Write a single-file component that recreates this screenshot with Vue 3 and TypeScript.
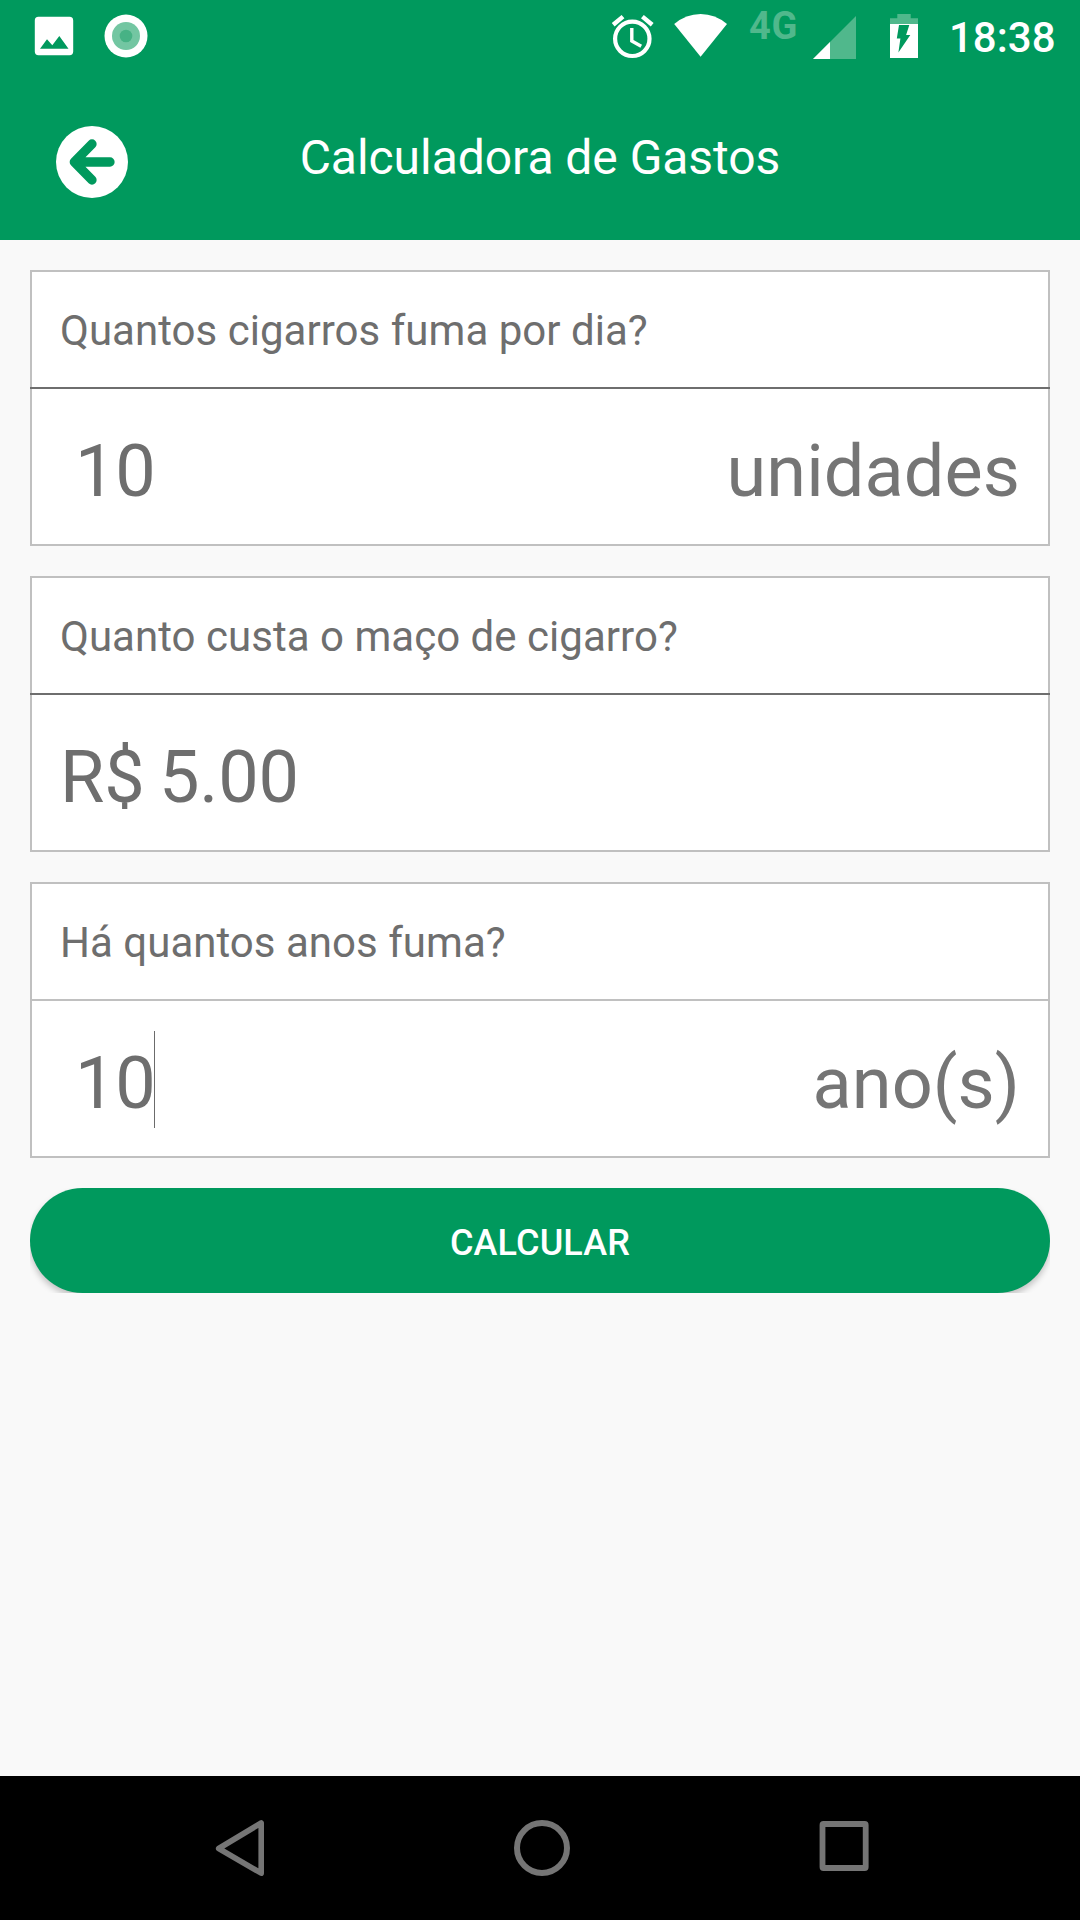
<script setup lang="ts">
interface Field {
  id: string
  label: string
  value: string
  unit?: string
  indented: boolean
  focused: boolean
}

const fields: Field[] = [
  { id: 'perDay', label: 'Quantos cigarros fuma por dia?', value: '10', unit: 'unidades', indented: true, focused: false },
  { id: 'price', label: 'Quanto custa o maço de cigarro?', value: 'R$ 5.00', indented: false, focused: false },
  { id: 'years', label: 'Há quantos anos fuma?', value: '10', unit: 'ano(s)', indented: true, focused: true },
]
</script>

<template>
  <div class="screen">
    <header class="header">
      <div class="status">
        <svg class="photo" width="40" height="40" viewBox="34 16 40 40">
          <path fill="#fff" fill-rule="evenodd" d="M38.5 16.7h31a3.7 3.7 0 0 1 3.7 3.7v31.200a3.700 3.700 0 0 1-3.700 3.700h-31a3.700 3.700 0 0 1-3.700-3.700V20.400a3.700 3.700 0 0 1 3.700-3.700zM40 48.700h28.500L59.300 36l-7 9.300-5.300-6z" />
        </svg>
        <svg class="record" width="44" height="44" viewBox="0 0 44 44">
          <circle cx="22" cy="22" r="21.500" fill="#fff" />
          <circle cx="22" cy="22" r="14" fill="#73c6a2" />
          <circle cx="22" cy="22" r="6.300" fill="#47b285" />
        </svg>
        <div class="spacer"></div>
        <svg class="alarm" width="44" height="46" viewBox="610 14 44 46">
          <g fill="none" stroke="#fff">
            <circle cx="632.300" cy="38.800" r="17.200" stroke-width="4.200" />
            <path stroke-width="3.400" d="M631.800 28v13l9.400 5.200" />
            <path stroke-width="4.400" d="M613.200 24.800l9.800-8.200M642.400 16.600l9.800 8.200" />
          </g>
        </svg>
        <svg class="wifi" width="54" height="44" viewBox="674 14 54 44">
          <path fill="#fff" d="M674.200 24Q686 14 700.600 14T727 24L700.600 56.700z" />
        </svg>
        <span class="network">4G</span>
        <svg class="signal" width="44" height="44" viewBox="813 16 44 44">
          <path fill="#50b88c" d="M856 16v43h-43z" />
          <path fill="#fff" d="M830 42v17h-17z" />
        </svg>
        <svg class="battery" width="28" height="45" viewBox="890 14 28 45">
          <path fill="#50b88c" d="M897.300 14h13.400v4.300h7.300V24h-28v-5.700h7.300z" />
          <path fill="#fff" fill-rule="evenodd" d="M890 24h28v34h-28zM899 25l-2.200 13.500h3.600l-2 14L910.300 35h-4.200l3.200-10z" />
        </svg>
        <span class="clock">18:38</span>
      </div>
      <div class="appbar">
        <svg class="back" width="72" height="72" viewBox="0 0 72 72">
          <circle cx="36" cy="36" r="36" fill="#fff" />
          <path fill="none" stroke="#00995d" stroke-width="9.300" stroke-linecap="round" stroke-linejoin="round" d="M36 18L18.300 36 36 54M19 36h35" />
          <path fill="#00995d" d="M18 36l8-8v16z" />
        </svg>
        <h1 class="title">Calculadora de Gastos</h1>
      </div>
    </header>

    <main class="content">
      <section v-for="f in fields" :key="f.id" class="card" :class="{ focused: f.focused }">
        <div class="label">{{ f.label }}</div>
        <div class="entry">
          <span class="value" :class="{ indented: f.indented }">{{ f.value }}</span>
          <i v-if="f.focused" class="caret"></i>
          <span v-if="f.unit" class="unit">{{ f.unit }}</span>
        </div>
      </section>
      <div class="button-clip">
        <button class="calculate" type="button">CALCULAR</button>
      </div>
    </main>

    <nav class="navbar">
      <svg width="60" height="60" viewBox="210 1818 60 60">
        <path fill="none" stroke="#757575" stroke-width="5.600" stroke-linejoin="round" d="M261.200 1823v50.200L218.700 1848.500z" />
      </svg>
      <svg width="60" height="60" viewBox="512 1818 60 60">
        <circle cx="542" cy="1848" r="25" fill="none" stroke="#757575" stroke-width="6" />
      </svg>
      <svg width="60" height="60" viewBox="814 1818 60 60">
        <rect x="822.500" y="1824" width="43.200" height="44" rx="1" fill="none" stroke="#757575" stroke-width="5.800" />
      </svg>
    </nav>
  </div>
</template>

<style>
body {
  margin: 0;
}
</style>

<style scoped>
.screen {
  width: 1080px;
  height: 1920px;
  display: flex;
  flex-direction: column;
  overflow: hidden;
  background: #f9f9f9;
  font-family: Roboto, 'Liberation Sans', sans-serif;
}

svg {
  display: block;
  flex: none;
}

.header {
  height: 240px;
  background: #00995d;
  color: #fff;
}

.status {
  height: 72px;
  display: flex;
  align-items: flex-start;
  box-sizing: border-box;
  padding: 0 23px 0 34px;
}

.photo {
  margin-top: 16px;
}

.record {
  margin: 14px 0 0 30px;
}

.spacer {
  flex: 1;
}

.alarm {
  margin-top: 14px;
}

.wifi {
  margin: 14px 0 0 20px;
}

.network {
  width: 50px;
  margin: 4px 0 0 21px;
  font-size: 38px;
  line-height: 45px;
  font-weight: 700;
  letter-spacing: 0.8px;
  color: #50b88c;
}

.signal {
  margin: 16px 0 0 14px;
}

.battery {
  margin: 14px 0 0 33px;
}

.clock {
  width: 108px;
  margin: 14px 0 0 31px;
  font-size: 42px;
  line-height: 48px;
  font-weight: 500;
}

.appbar {
  height: 168px;
  display: flex;
  align-items: center;
  padding: 0 128px 0 56px;
}

.back {
  margin-top: 12px;
}

.title {
  flex: 1;
  margin: 4px 0 0;
  text-align: center;
  font-size: 48px;
  line-height: 56px;
  font-weight: 400;
  letter-spacing: -0.04px;
}

.content {
  flex: 1;
  display: flex;
  flex-direction: column;
  gap: 30px;
  padding: 30px;
}

.card {
  height: 276px;
  box-sizing: border-box;
  display: flex;
  flex-direction: column;
  border: 2px solid #c0c0c0;
  background: #fff;
  color: #6e6e6e;
}

.label {
  height: 117px;
  box-sizing: border-box;
  margin: 0 -2px;
  padding: 2px 30px 0;
  border-bottom: 2px solid #6e6e6e;
  font-size: 42px;
  line-height: 113px;
  letter-spacing: 0.03px;
}

.focused .label {
  border-bottom-color: #c0c0c0;
}

.entry {
  flex: 1;
  display: flex;
  align-items: center;
  padding: 0 28px;
  font-size: 72px;
  line-height: 84px;
}

.value,
.unit {
  padding-top: 11px;
  white-space: pre;
}

.value {
  letter-spacing: -0.2px;
  word-spacing: -3px;
}

.indented {
  padding-left: 15px;
}

.caret {
  width: 1px;
  height: 97px;
  margin: 1px -1px 0 -2px;
  background: #6b6b6b;
}

.unit {
  margin-left: auto;
  letter-spacing: 0.1px;
  color: #757575;
}

.button-clip {
  height: 105px;
  overflow: hidden;
}

.calculate {
  display: block;
  width: 100%;
  height: 105px;
  padding: 5px 0 0;
  border: 0;
  border-radius: 53px;
  background: #00995d;
  box-shadow: 0 4px 6px rgba(0, 0, 0, 0.22);
  color: #fff;
  font-family: inherit;
  font-size: 36px;
  font-weight: 500;
  letter-spacing: 0.15px;
}

.navbar {
  height: 144px;
  box-sizing: border-box;
  display: flex;
  align-items: center;
  gap: 242px;
  padding-left: 210px;
  background: #000;
}
</style>
